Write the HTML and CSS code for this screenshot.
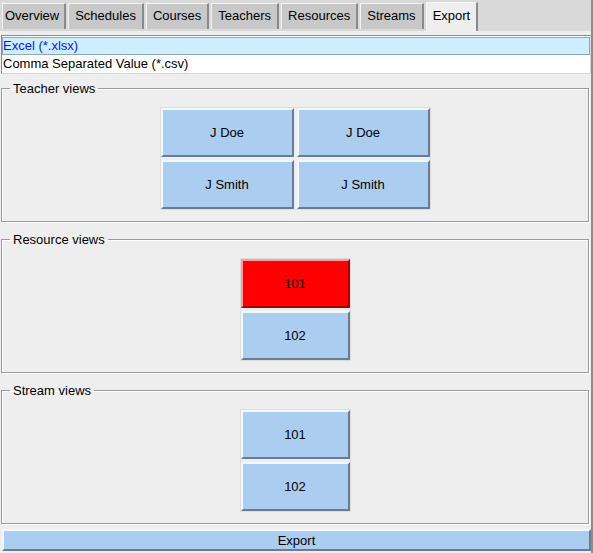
FILE: index.html
```html
<!DOCTYPE html>
<html>
<head>
<meta charset="utf-8">
<link rel="stylesheet" href="styles.css">
</head>
<body>
<div class="app">
  <div class="tabbar">
    <div class="tab first">Overview</div>
    <div class="tab">Schedules</div>
    <div class="tab">Courses</div>
    <div class="tab">Teachers</div>
    <div class="tab">Resources</div>
    <div class="tab">Streams</div>
    <div class="tab active">Export</div>
  </div>
  <div class="content">
    <div class="listbox">
      <div class="item selected">Excel (*.xlsx)</div>
      <div class="item">Comma Separated Value (*.csv)</div>
    </div>
    <fieldset class="group first">
      <legend>Teacher views</legend>
      <div class="btngrid two">
        <div class="btn">J Doe</div>
        <div class="btn">J Doe</div>
        <div class="btn">J Smith</div>
        <div class="btn">J Smith</div>
      </div>
    </fieldset>
    <fieldset class="group">
      <legend>Resource views</legend>
      <div class="btngrid one">
        <div class="btn red">101</div>
        <div class="btn">102</div>
      </div>
    </fieldset>
    <fieldset class="group">
      <legend>Stream views</legend>
      <div class="btngrid one">
        <div class="btn">101</div>
        <div class="btn">102</div>
      </div>
    </fieldset>
    <div class="export">Export</div>
  </div>
</div>
</body>
</html>
```
FILE: styles.css
```css
html, body {
  margin: 0;
  padding: 0;
  background: #eeeeee;
}
body {
  font-family: "Liberation Sans", Arial, sans-serif;
  font-size: 13px;
  color: #000;
}
.app {
  width: 591px;
  height: 553px;
  border-right: 2px solid #8c8c8c;
  background: #eeeeee;
  overflow: hidden;
}
.tabbar {
  display: flex;
  align-items: flex-start;
  gap: 2px;
  height: 31px;
  padding-left: 2px;
  background: #d9d9d9;
  box-sizing: border-box;
  padding-top: 2px;
}
.tab {
  box-sizing: border-box;
  height: 26px;
  margin-top: 1px;
  padding: 0 6px 0 6px;
  line-height: 24px;
  background: #c8c8c8;
  border-top: 1px solid #f4f4f4;
  border-left: 1px solid #f4f4f4;
  border-right: 2px solid #8a8a8a;
  white-space: nowrap;
}
.tab.first {
  padding-left: 2px;
  padding-right: 5px;
}
.tab.active {
  background: #eeeeee;
  height: 29px;
  margin-top: 0;
  line-height: 26px;
  padding: 0 6px 0 6px;
}
.content {
  padding: 4px 0 0 1px;
}
.listbox {
  box-sizing: border-box;
  width: 590px;
  height: 39px;
  border-top: 1px solid #8a8a8a;
  border-left: 1px solid #8a8a8a;
  border-right: 1px solid #d8d8d8;
  border-bottom: 1px solid #d8d8d8;
  background: #ffffff;
  padding: 1px 0 0 0;
}
.item {
  box-sizing: border-box;
  height: 18px;
  line-height: 17px;
  padding-left: 1px;
  white-space: nowrap;
}
.item.selected {
  background: #cceeff;
  color: #1010ff;
  border: 1px solid #8fa8b8;
  line-height: 16px;
  padding-left: 0;
}
.group {
  margin: 10px 2px 0 0;
  padding: 12px 0 10px 0;
  border: 1px solid #9a9a9a;
  box-shadow: inset 1px 1px 0 #ffffff, 1px 1px 0 #ffffff;
  display: flex;
  justify-content: center;
  min-width: 0;
  height: 141px;
  box-sizing: border-box;
}
.group.first {
  margin-top: 7px;
}
.group legend {
  margin-left: 8px;
  padding: 0 3px;
  line-height: 15px;
}
.btngrid {
  display: grid;
  gap: 3px;
  border: 1px solid #dcdcdc;
  align-self: flex-start;
  margin-top: -1px;
}
.btngrid.two {
  grid-template-columns: 133px 133px;
  grid-auto-rows: 49px;
}
.btngrid.one {
  grid-template-columns: 109px;
  grid-auto-rows: 49px;
}
.btn {
  box-sizing: border-box;
  display: flex;
  align-items: center;
  justify-content: center;
  background: #abcdf0;
  border-top: 2px solid #f2f8ff;
  border-left: 2px solid #f2f8ff;
  border-bottom: 2px solid #687d91;
  border-right: 2px solid #687d91;
  padding-bottom: 1px;
}
.btn.red {
  background: #ff0000;
  border-top-color: #ff9a9a;
  border-left-color: #ff9a9a;
  border-bottom-color: #a80000;
  border-right-color: #a80000;
}
.export {
  box-sizing: border-box;
  margin: 5px 0 0 1px;
  width: 589px;
  height: 22px;
  display: flex;
  align-items: center;
  justify-content: center;
  background: #abcdf0;
  border-top: 2px solid #f2f8ff;
  border-left: 2px solid #f2f8ff;
  border-bottom: 2px solid #687d91;
  border-right: 2px solid #687d91;
}
```
